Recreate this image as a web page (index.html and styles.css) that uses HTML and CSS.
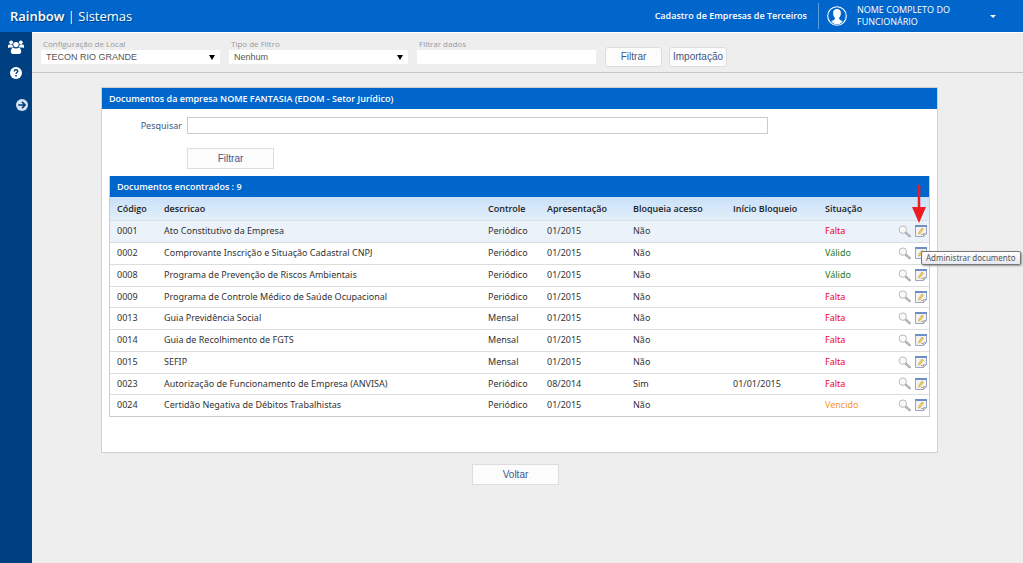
FILE: index.html
```html
<!DOCTYPE html>
<html lang="pt-BR">
<head>
<meta charset="utf-8">
<title>Rainbow | Sistemas</title>
<link rel="stylesheet" href="styles.css">
</head>
<body>
<svg class="sprite" aria-hidden="true">
  <symbol id="lens" viewBox="0 0 14 14">
    <path d="M8.600 8.400l4 3.600" stroke="#999" stroke-width="2.400" stroke-linecap="round"/>
    <path d="M9.200 8.800l3.200 2.900" stroke="#e4e4e4" stroke-width="1" stroke-linecap="round"/>
    <circle cx="5.200" cy="5" r="4" fill="#f8f8f8" stroke="#b4b4b4" stroke-width="1"/>
    <path d="M3 5a2.300 2.300 0 0 1 2-2.200" fill="none" stroke="#fff"/>
  </symbol>
  <symbol id="note" viewBox="0 0 12 12">
    <path d="M.5.5h11v8l-3 3h-8z" fill="#f1f3f9" stroke="#9aa6c2"/>
    <path d="M0 0h12v2H0z" fill="#6f8fc4"/>
    <path d="M11.500 8.500h-3v3z" fill="#d3d9e8" stroke="#8f9dbd" stroke-width=".7"/>
    <path d="M3.400 9.200l.5-2 3-4.200 1.600 1.100-3 4.200z" fill="#f6cf4a" stroke="#c79a2c" stroke-width=".5"/>
    <path d="M6 9.600h2" stroke="#b69135" stroke-width=".8"/>
  </symbol>
</svg>
<header class="topbar">
  <h1 class="brand"><b>Rainbow</b> | <span>Sistemas</span></h1>
  <strong class="module">Cadastro de Empresas de Terceiros</strong>
  <button class="user" type="button">
    <svg class="avatar" viewBox="0 0 20 20" aria-hidden="true">
      <circle cx="10" cy="10" r="9.300" fill="none" stroke="#fff" stroke-width="1.100"/>
      <path d="M10 3c2.600 0 4 1.700 3.900 4.200 0 1.900-.7 3.300-1.700 4.300v1.600c.5 1.200 2 1.500 3.600 2.300A8 8 0 0 1 10 18.200a8 8 0 0 1-5.800-2.800c1.600-.8 3.100-1.100 3.600-2.300v-1.600C6.800 10.500 6.100 9.100 6.100 7.200 6 4.700 7.400 3 10 3z" fill="#fff"/>
    </svg>
    <span class="user-name">NOME COMPLETO DO FUNCIONÁRIO</span>
    <svg class="caret" viewBox="0 0 6 3" aria-hidden="true"><path d="M0 0h6L3 3z" fill="#fff"/></svg>
  </button>
</header>
<div class="shell">
  <nav class="sidebar" aria-label="Menu">
    <a href="#" aria-label="Equipe">
      <svg class="team" viewBox="0 0 16 14" aria-hidden="true" fill="#fff">
        <circle cx="3.200" cy="2.300" r="1.900"/><circle cx="12.800" cy="2.300" r="1.900"/>
        <circle cx="8" cy="4.600" r="2.700"/>
        <path d="M0 7.600V6.200c0-1 .6-1.600 1.400-1.600h2.900c0 1.200.4 2.200 1.200 3H1.200C.5 8.300 0 8.100 0 7.600zM16 7.600V6.200c0-1-.6-1.600-1.400-1.600h-2.900c0 1.200-.4 2.200-1.200 3h4.300c.7.700 1.200.5 1.200 0z"/>
        <path d="M2.800 11.800c0-2.500.8-4 2.600-4.100.7.500 1.600.8 2.600.8s1.900-.3 2.600-.8c1.800.1 2.600 1.600 2.600 4.100 0 1.300-.8 2.100-2 2.100H4.800c-1.200 0-2-.8-2-2.100z"/>
      </svg>
    </a>
    <a href="#" aria-label="Ajuda">
      <svg class="round" viewBox="0 0 12 12" aria-hidden="true">
        <circle cx="6" cy="6" r="6" fill="#fff"/>
        <path d="M4.200 4.500C4.300 3.300 5 2.800 6 2.800c1.100 0 1.800.6 1.800 1.500C7.800 5.600 6 5.500 6 7" fill="none" stroke="#003f80" stroke-width="1.400"/>
        <path d="M5.200 7.900h1.600v1.500H5.200z" fill="#003f80"/>
      </svg>
    </a>
    <a class="expand" href="#" aria-label="Expandir menu">
      <svg class="round" viewBox="0 0 12 12" aria-hidden="true">
        <circle cx="6" cy="6" r="6" fill="#d5e3f2"/>
        <path d="M2.300 6h6.500M6 2.900L9.100 6 6 9.100" fill="none" stroke="#003f80" stroke-width="1.600"/>
      </svg>
    </a>
  </nav>
  <main class="main">
    <form class="toolbar">
      <div class="field">
        <label for="local">Configuração de Local</label>
        <span class="picker"><select id="local"><option>TECON RIO GRANDE</option></select></span>
      </div>
      <div class="field">
        <label for="tipo">Tipo de Filtro</label>
        <span class="picker"><select id="tipo"><option>Nenhum</option></select></span>
      </div>
      <div class="field">
        <label for="dados">Filtrar dados</label>
        <input id="dados" type="text">
      </div>
      <div class="buttons">
        <button class="soft" type="button">Filtrar</button>
        <button class="soft" type="button">Importação</button>
      </div>
    </form>
    <div class="content">
      <section class="panel">
        <h2 class="bar">Documentos da empresa NOME FANTASIA (EDOM - Setor Jurídico)</h2>
        <form class="search">
          <label for="pesquisar">Pesquisar</label>
          <input id="pesquisar" type="text">
          <button class="plain" type="button">Filtrar</button>
        </form>
        <div class="results">
          <h3 class="bar">Documentos encontrados : 9</h3>
          <table>
            <colgroup><col class="c-code"><col><col class="c-control"><col class="c-date"><col class="c-block"><col class="c-start"><col class="c-status"><col class="c-actions"></colgroup>
            <thead>
              <tr><th>Código</th><th>descricao</th><th>Controle</th><th>Apresentação</th><th>Bloqueia acesso</th><th>Início Bloqueio</th><th>Situação</th><td></td></tr>
            </thead>
            <tbody>
              <tr class="hover"><td>0001</td><td>Ato Constitutivo da Empresa</td><td>Periódico</td><td>01/2015</td><td>Não</td><td></td><td class="falta">Falta</td>
                <td><div class="actions"><button type="button" aria-label="Visualizar"><svg class="lens"><use href="#lens"/></svg></button><button type="button" aria-label="Administrar documento"><svg class="note"><use href="#note"/></svg><svg class="arrow" viewBox="0 0 14 38"><path d="M7 0v26" stroke="#ed1c24" stroke-width="2.500"/><path d="M0 22h14L7 38z" fill="#ed1c24"/></svg><span class="tip" role="tooltip">Administrar documento</span></button></div></td></tr>
              <tr><td>0002</td><td>Comprovante Inscrição e Situação Cadastral CNPJ</td><td>Periódico</td><td>01/2015</td><td>Não</td><td></td><td class="valido">Válido</td>
                <td><div class="actions"><button type="button" aria-label="Visualizar"><svg class="lens"><use href="#lens"/></svg></button><button type="button" aria-label="Administrar"><svg class="note"><use href="#note"/></svg></button></div></td></tr>
              <tr><td>0008</td><td>Programa de Prevenção de Riscos Ambientais</td><td>Periódico</td><td>01/2015</td><td>Não</td><td></td><td class="valido">Válido</td>
                <td><div class="actions"><button type="button" aria-label="Visualizar"><svg class="lens"><use href="#lens"/></svg></button><button type="button" aria-label="Administrar"><svg class="note"><use href="#note"/></svg></button></div></td></tr>
              <tr><td>0009</td><td>Programa de Controle Médico de Saúde Ocupacional</td><td>Periódico</td><td>01/2015</td><td>Não</td><td></td><td class="falta">Falta</td>
                <td><div class="actions"><button type="button" aria-label="Visualizar"><svg class="lens"><use href="#lens"/></svg></button><button type="button" aria-label="Administrar"><svg class="note"><use href="#note"/></svg></button></div></td></tr>
              <tr><td>0013</td><td>Guia Previdência Social</td><td>Mensal</td><td>01/2015</td><td>Não</td><td></td><td class="falta">Falta</td>
                <td><div class="actions"><button type="button" aria-label="Visualizar"><svg class="lens"><use href="#lens"/></svg></button><button type="button" aria-label="Administrar"><svg class="note"><use href="#note"/></svg></button></div></td></tr>
              <tr><td>0014</td><td>Guia de Recolhimento de FGTS</td><td>Mensal</td><td>01/2015</td><td>Não</td><td></td><td class="falta">Falta</td>
                <td><div class="actions"><button type="button" aria-label="Visualizar"><svg class="lens"><use href="#lens"/></svg></button><button type="button" aria-label="Administrar"><svg class="note"><use href="#note"/></svg></button></div></td></tr>
              <tr><td>0015</td><td>SEFIP</td><td>Mensal</td><td>01/2015</td><td>Não</td><td></td><td class="falta">Falta</td>
                <td><div class="actions"><button type="button" aria-label="Visualizar"><svg class="lens"><use href="#lens"/></svg></button><button type="button" aria-label="Administrar"><svg class="note"><use href="#note"/></svg></button></div></td></tr>
              <tr><td>0023</td><td>Autorização de Funcionamento de Empresa (ANVISA)</td><td>Periódico</td><td>08/2014</td><td>Sim</td><td>01/01/2015</td><td class="falta">Falta</td>
                <td><div class="actions"><button type="button" aria-label="Visualizar"><svg class="lens"><use href="#lens"/></svg></button><button type="button" aria-label="Administrar"><svg class="note"><use href="#note"/></svg></button></div></td></tr>
              <tr><td>0024</td><td>Certidão Negativa de Débitos Trabalhistas</td><td>Periódico</td><td>01/2015</td><td>Não</td><td></td><td class="vencido">Vencido</td>
                <td><div class="actions"><button type="button" aria-label="Visualizar"><svg class="lens"><use href="#lens"/></svg></button><button type="button" aria-label="Administrar"><svg class="note"><use href="#note"/></svg></button></div></td></tr>
            </tbody>
          </table>
        </div>
      </section>
      <div class="footer"><button class="plain" type="button">Voltar</button></div>
    </div>
  </main>
</div>
</body>
</html>
```
FILE: styles.css
```css
* { box-sizing: border-box; }

body {
  margin: 0;
  min-height: 100vh;
  display: flex;
  flex-direction: column;
  background: #eee;
  font: 9px/12px "Noto Sans", sans-serif;
  color: #333;
  overflow-x: hidden;
}

button, input, select { font: inherit; color: inherit; margin: 0; }
button { cursor: pointer; }
svg { display: block; }
.sprite { position: absolute; width: 0; height: 0; }

.topbar {
  display: flex;
  align-items: center;
  height: 32px;
  padding-left: 10px;
  background: #06c;
  color: #fff;
  font-family: "Open Sans", sans-serif;
}
.brand {
  margin: 0 auto 0 0;
  font-size: 13px;
  line-height: 20px;
  font-weight: 400;
  text-shadow: 1px 1px 1px #003f80;
}
.brand b { font-weight: 600; }
.module { font-size: 9px; font-weight: 600; }
.user {
  display: flex;
  align-items: center;
  width: 205px;
  height: 26px;
  margin-left: 11px;
  padding: 0 27px 0 8px;
  border: 0;
  border-left: 1px solid #5c9fe0;
  background: none;
  font-size: 9px;
  font-weight: 500;
  text-align: left;
}
.avatar { width: 20px; height: 20px; }
.user-name { width: 110px; margin: 0 auto 0 10px; }
.caret { width: 6px; height: 3px; }

.shell { flex: 1; display: flex; }
.sidebar {
  display: flex;
  flex-direction: column;
  align-items: center;
  gap: 13px;
  width: 32px;
  padding-top: 8px;
  background: #003f80;
}
.team { width: 16px; height: 14px; }
.round { width: 12px; height: 12px; }
.expand { align-self: flex-end; margin: 7px 4px 0 0; }

.main { flex: 1; min-width: 0; }
.toolbar {
  display: flex;
  align-items: flex-end;
  gap: 9px;
  height: 41px;
  padding: 0 10px 5px 9px;
  border-top: 1px solid #fff;
  border-bottom: 1px solid #c4c4c4;
}
.field { width: 179px; padding-bottom: 3px; }
.field label {
  display: block;
  padding-left: 2px;
  font-family: "Open Sans", sans-serif;
  font-size: 8px;
  color: #999;
}
.field input, .field select {
  display: block;
  width: 100%;
  height: 14px;
  padding: 0 5px;
  border: 0;
  border-radius: 0;
  background: #fff;
  appearance: none;
  font-family: "Liberation Sans", sans-serif;
  font-size: 9px;
  line-height: 14px;
  color: #555;
}
.picker { position: relative; display: block; }
.picker::after {
  content: "";
  position: absolute;
  right: 5px;
  top: 5px;
  border: solid transparent;
  border-width: 5px 3px 0;
  border-top-color: #000;
  pointer-events: none;
}
.buttons { display: flex; gap: 7px; }
.soft {
  min-width: 57px;
  height: 20px;
  padding: 0 3px;
  border: 1px solid #ddd;
  border-radius: 3px;
  background: #fcfcfc;
  font-family: "Liberation Sans", sans-serif;
  font-size: 10px;
  color: #3f5787;
}

.content { padding: 14px 85px 0 69px; }
.panel {
  padding-bottom: 35px;
  border: 1px solid #d0d0d0;
  background: #fff;
}
.bar {
  margin: 0;
  padding: 0 7px;
  background: #06c;
  font-family: "Open Sans", sans-serif;
  font-size: 9px;
  line-height: 21px;
  font-weight: 600;
  color: #fff;
}
.search {
  display: grid;
  grid-template-columns: 80px 1fr;
  column-gap: 5px;
  row-gap: 14px;
  align-items: center;
  padding: 8px 169px 7px 0;
  color: #3f5787;
}
.search label { text-align: right; }
.search input { width: 100%; height: 17px; border: 1px solid #ccc; padding: 0 4px; }
.plain {
  width: 87px;
  height: 21px;
  padding: 0;
  border: 1px solid #ddd;
  background: #fcfcfc;
  font-family: "Liberation Sans", sans-serif;
  font-size: 10px;
  color: #3f5787;
}
.search .plain { grid-column: 2; }

.results { margin: 0 7px; border: 1px solid #ccc; border-top: 0; }
table { width: 100%; table-layout: fixed; border-collapse: collapse; }
.c-code { width: 47px; }
.c-control { width: 59px; }
.c-date { width: 86px; }
.c-block { width: 100px; }
.c-start { width: 92px; }
.c-status { width: 74px; }
.c-actions { width: 37px; }
th, td { height: 22px; padding: 0 0 0 7px; text-align: left; white-space: nowrap; }
th { padding-top: 1px; font-family: "Open Sans", sans-serif; font-weight: 600; color: #222; }
thead tr { height: 23px; background: linear-gradient(#c9e0f7, #e3effb); }
tbody tr { border-top: 1px solid #ddd; }
tbody tr:nth-child(4n) td { height: 21px; }
td:last-child { padding: 0; }
.hover { background: #ebf2f9; }
.falta { color: #f00018; }
.valido { color: #1c7a1c; }
.vencido { color: #f8962b; }

.actions { display: flex; gap: 4px; align-items: center; padding-left: 6px; }
.actions button { position: relative; padding: 0; border: 0; background: none; }
.lens { width: 13px; height: 13px; }
.note { width: 12px; height: 12px; }
.arrow { position: absolute; left: -3px; bottom: 14px; width: 14px; height: 38px; z-index: 1; }
.tip {
  position: absolute;
  left: 6px;
  top: 26px;
  z-index: 2;
  padding: 0 4px;
  border: 1px solid #777;
  border-radius: 2px;
  background: linear-gradient(#fff, #e6e8f1);
  box-shadow: 1px 1px 2px #999;
  white-space: nowrap;
  font-size: 8px;
  color: #555;
}
.footer { padding: 11px 8px 20px 0; text-align: center; }
```
